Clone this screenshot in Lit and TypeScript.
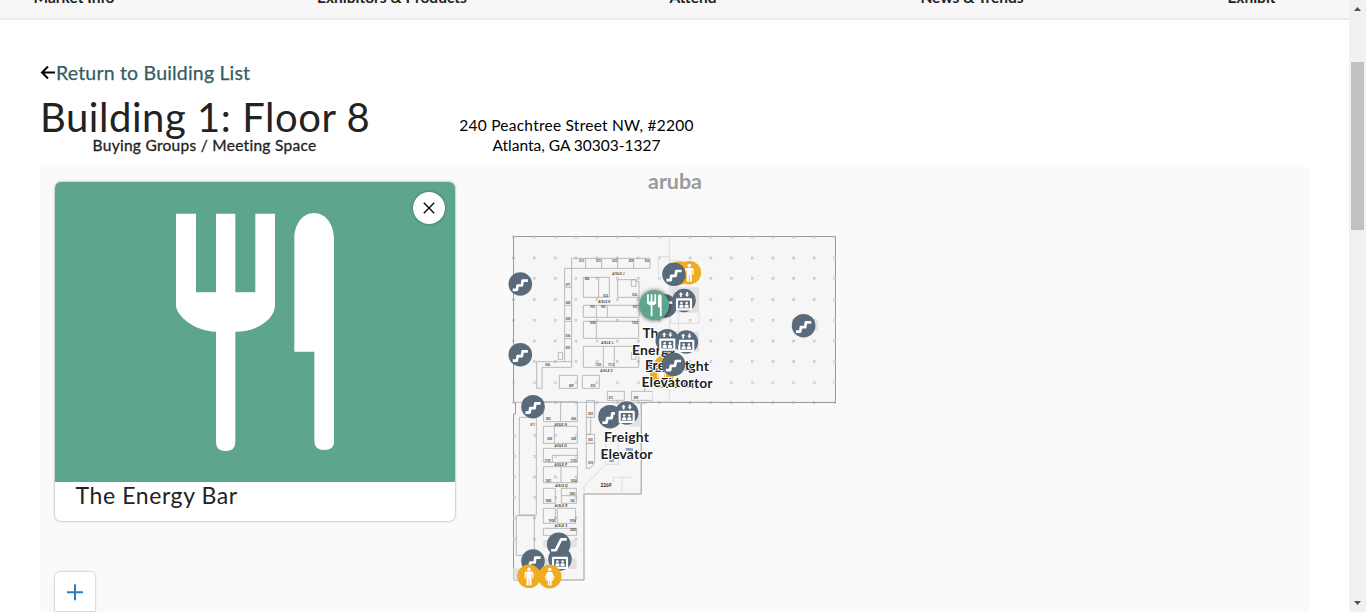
import { LitElement, html, svg, css } from "lit";
import { customElement } from "lit/decorators.js";

const FORK =
  "M363 95h60v236h60V95h58v236h60V95h59v275C660 408 612 449 541 449V781q0 26-29 26t-29-26V449C418 449 363 400 363 370zM718 509V170C718 130 740 93 777 93s60 37 60 77V779q0 25-29 25t-30-25V509z";

const NAV = ["Market Info", "Exhibitors & Products", "Attend", "News & Trends", "Exhibit"];

type Pin = [kind: string, x: number, y: number];

const RESTROOMS_BACK: Pin[] = [
  ["man", 680, 273], ["man", 689.3, 272.7], ["woman", 665, 367], ["man", 661.7, 376],
];
const PINS: Pin[] = [
  ["stairs", 520.3, 284], ["stairs", 520.3, 354.7], ["stairs", 533, 406.7],
  ["stairs", 610, 416.7], ["lift", 626.7, 413], ["stairs", 674, 274.3],
  ["stairs", 665, 306], ["lift", 684, 300.5], ["lift", 686.3, 342], ["lift", 667.3, 340.7],
  ["stairs", 673.5, 364.3], ["stairs", 803.6, 325.7], ["stairs", 533, 561],
  ["lift", 560, 559], ["escalator", 558.7, 544.3], ["man", 529, 576.3], ["woman", 549.7, 576.6],
];

const COLS = [513.5, 534.3, 555.3, 576, 597, 617.3, 638.3, 659.3, 690.2, 710.8, 731.4, 752.3, 773, 793.6, 814.2, 834.8];
const ROWS = [237, 258, 278.3, 299.5, 320.3, 341, 361.5, 382.5, 402.5];
const LOWER_ROWS = [435.5, 456.5, 477, 497.5, 518, 539];

const glyph = (kind: string) => {
  switch (kind) {
    case "stairs":
      return svg`<path d="M-7.6 5.9h4.2l.7-4.4h4.3l.7-4.8H7.6" class="line" stroke-width="2.7"/>`;
    case "escalator":
      return svg`<path d="M-7.6 5.9h4.7L2.5-4.9H8" class="line" stroke-width="2.6"/>`;
    case "lift":
      return svg`<path d="M-7-1.1H7V8.900H-7z" class="line" stroke-width="2.1" />
        <path d="M-5.300-5.7 -3.1-8.4 -.9-5.700zM.9-6.300H5.300L3.1-3.600z" fill="#fff"/>
        <path d="M-3.1-6V-3.600M3.1-6V-8.400" class="line" stroke-width="1.7"/>
        <path d="M-4.600 7.200V5.200q0-.9.9-.9h2.200q.9 0 .9.9v2zM.6 7.200V5.200q0-.9.9-.9h2.200q.9 0 .9.9v2z" fill="#fff"/>
        <circle cx="-2.6" cy="2.500" r="1.300" fill="#fff"/><circle cx="2.6" cy="2.500" r="1.300" fill="#fff"/>`;
    case "woman":
      return svg`<circle cy="-7.1" r="1.8" fill="#fff"/>
        <path d="M-2.3-4.7h4.6L5 1.2 3.8 1.8 2.1-1.6 4 4H1.9V9H.3V4H-.3V9h-1.6V4H-4L-2.1-1.6-3.8 1.8-5 1.2z" fill="#fff"/>`;
    default:
      return svg`<circle cy="-7.1" r="1.8" fill="#fff"/>
        <path d="M-3.2-4.7h6.4l1.2 1.1V2H3.2V-2.6H2.5V9H.4V2.5h-.8V9h-2.1V-2.6h-.7V2h-1.2V-3.6z" fill="#fff"/>`;
  }
};

const pin = ([kind, x, y]: Pin) => svg`<g transform="translate(${x} ${y})">
  <circle r="11.8" fill=${kind === "man" || kind === "woman" ? "#f0ac1e" : "#596b7b"}/>${glyph(kind)}</g>`;

const aisle = (letter: string, x: number, y: number) =>
  svg`<text class="aisle" x=${x} y=${y} text-anchor="middle" textLength="37">AISLE ${letter}</text>`;

const booth = (n: string, x: number, y: number) =>
  svg`<text class="booth" x=${x} y=${y} text-anchor="middle">${n}</text>`;

const label = (words: [string, number][], x: number, y: number) =>
  words.map(([w, len], i) => svg`<text class="label" x=${x} y=${y + i * 17} text-anchor="middle" textLength=${len}>${w}</text>`);

@customElement("floor-map")
export class FloorMap extends LitElement {
  static styles = css`
    :host { display: block; }
    svg { display: block; width: 1269px; height: 445px; }
    text { font-family: Lato, "Liberation Sans", sans-serif; }
    .brand { font: 700 20px Lato, sans-serif; fill: #9b9b9b; }
    .wall { fill: #f6f6f6; stroke: #999; stroke-width: 1; }
    .rooms { fill: none; stroke: #a9a9a9; stroke-width: 2.4; }
    .faint { fill: none; stroke: #dedede; stroke-width: 3; }
    .shade { fill: #e2e2e2; }
    .aisle { font: italic 700 10px Lato, sans-serif; fill: #333; stroke: none; }
    .booth { font: 700 8px Lato, sans-serif; fill: #444; stroke: none; }
    .column { fill: none; stroke: #c4c4c4; stroke-width: .8; }
    .line { fill: none; stroke: #fff; stroke-linejoin: round; }
    .label { font: 700 14px Lato, sans-serif; fill: #222; stroke: #fff; stroke-width: 2px; paint-order: stroke; stroke-linejoin: round; }
    .active { filter: drop-shadow(0 0 2px #000b); }
  `;

  render() {
    return html`<svg viewBox="40 167 1269 445">
      <text class="brand" x="648" y="188.800" textLength="54" lengthAdjust="spacingAndGlyphs">aruba</text>
      <path class="wall" d="M513.5 236.5H835.5V402.5H646V403H641.2V494H584V580H513.5V414H515.5V402.5H513.5z"/>
      ${ROWS.map((y) => COLS.map((x) => svg`<rect class="column" x=${x - 0.9} y=${y - 0.9} width="1.8" height="1.8"/>`))}
      ${LOWER_ROWS.map((y) => [514.5, 534.5, 555.5, 576].map((x) => svg`<rect class="column" x=${x - 0.9} y=${y - 0.9} width="1.8" height="1.8"/>`))}

      <g transform="translate(630 230) scale(.33333)">
        <path class="shade" d="M122 172h85v76h-85zM180 305h27v60h-27zM555 270h9v33h-9z"/>
        <path class="faint" d="M118 20V516M85 148V80h33v12h28v80h-24M122 248v32h85v-32M146 248v57M118 305h62M50 516h68M68 484v32"/>
      </g>

      <g class="rooms" transform="translate(505 230) scale(.33333)">
        <path d="M200 115V85H435V115H179V395M200 115V412H111V475H95V395H200M242 85v30M290 85v30M338 85v30M386 85v30M179 172h21M179 226h21M179 274h21M179 326h21"/>
        <path d="M160 367h13v21h-13zM235 142h78v60h-78zM281 142v60M402 202h-64v-53h55v5h9zM379 149h14v20h-14z"/>
        <path d="M235 226h167v36H235zM274 226v36M307 226v36M235 274h166v51H235zM274 274v51M235 349h166v63H235zM295 349v63M328 349v63M379 367h14v21h-14z"/>
        <path d="M163 436h54v39h-54zM232 436h51v39h-51zM307 484h51v27h-51zM442 484h-63v27h63M419 470v14"/>
        ${aisle("J", 340, 134)}${aisle("K", 298, 219)}${aisle("L", 307, 341)}${aisle("S", 304, 425)}
        ${booth("813", 230, 96)}${booth("821", 281, 96)}${booth("825", 329, 96)}${booth("829", 378, 96)}${booth("834", 426, 96)}
        ${booth("871", 189, 168)}${booth("868", 189, 221)}${booth("828", 189, 270)}${booth("836", 189, 322)}${booth("825", 189, 357)}
        ${booth("806", 246, 150)}${booth("824", 302, 200)}${booth("834", 389, 198)}${booth("901", 263, 234)}${booth("905", 295, 234)}${booth("921", 390, 234)}
        ${booth("1000", 263, 282)}${booth("1032", 390, 282)}${booth("1105", 280, 409)}${booth("1113", 318, 409)}
        ${booth("806", 128, 409)}${booth("809", 199, 472)}${booth("810", 264, 472)}${booth("811", 318, 508)}${booth("809", 393, 508)}
      </g>

      <g transform="translate(505 395) scale(.33333)">
        <path class="shade" d="M372 55h36v40h-36z"/>
        <path class="faint" d="M237 298V273L302 208V140M302 208h38M325 263V247h52M351 247v51M302 140h38v68"/>
        <g class="rooms">
          <path d="M25 22H640M94 67V360M43 360V67H94M115 20h102v60H115zM167 20v60M115 94h102v51H115zM148 94v51M115 160h102v42H115zM142 202v-21h75M115 215h102v48H115zM168 215v48"/>
          <path d="M115 280h36v45h-36zM169 280h45v45h-45zM169 302h45M244 17h25v50h-25zM244 67h13v51h-13zM244 118h25v27h-25zM244 145h25v60l-14 15h-11z"/>
          ${aisle("N", 167, 92)}${aisle("O", 167, 157)}${aisle("P", 167, 214)}${aisle("Q", 169, 276)}
          ${booth("811", 83, 94)}${booth("802", 130, 75)}${booth("804", 206, 75)}${booth("808", 134, 136)}${booth("808", 206, 136)}
          ${booth("1701", 128, 200)}${booth("1705", 206, 200)}${booth("1801", 130, 261)}${booth("1804", 206, 261)}
          ${booth("1800", 130, 321)}${booth("1805", 202, 299)}${booth("184", 202, 321)}${booth("803", 257, 61)}${booth("881", 257, 137)}${booth("818", 257, 206)}${booth("883", 320, 200)}
          <text class="aisle" x="372" y="167" text-anchor="middle">1905</text>
          <text x="303" y="277" text-anchor="middle" font-size="14" font-weight="700" fill="#222" stroke="none">2269</text>
        </g>
      </g>

      <g transform="translate(505 490) scale(.33333)">
        <path class="shade" d="M115 150h100v22H115zM115 205h100v32H115zM25 235h25v35H25z"/>
        <g class="rooms">
          <path d="M34 77h54v119H34zM43 75h51M115 55h36v45h-36zM157 55h55v45h-55zM115 136v-21h100v21z"/>
          ${aisle("R", 168, 52)}${aisle("S", 168, 112)}
          ${booth("1900", 140, 95)}${booth("1906", 203, 95)}${booth("2000", 204, 124)}
        </g>
      </g>

      ${RESTROOMS_BACK.map(pin)}
      ${label([["Bar", 22]], 656, 372)}
      ${label([["Freight", 45], ["Elevator", 52]], 686.5, 371)}
      ${label([["Freight", 45], ["Elevator", 52]], 667.5, 370)}
      ${label([["The", 23], ["Energy", 44]], 654, 338)}
      ${label([["Freight", 45], ["Elevator", 52]], 626.5, 442)}
      ${PINS.map(pin)}
      <g class="active" transform="translate(654.3 305.3)">
        <circle r="14.8" fill="#5da68d"/>
        <path transform="scale(.031) translate(-600 -450)" fill="#fff" d=${FORK}/>
      </g>
    </svg>`;
  }
}

@customElement("place-card")
export class PlaceCard extends LitElement {
  static styles = css`
    :host { display: block; width: 400px; height: 339px; border-radius: 6px; background: #fff; box-shadow: 0 0 0 1px #0000000d, 0 0 3px #0004; overflow: hidden; }
    .photo { display: grid; background: #5da68d; height: 300px; }
    .photo > * { grid-area: 1 / 1; }
    .close { width: 32px; height: 32px; border-radius: 50%; background: #fff; border: 0; padding: 0; justify-self: end; margin: 10px 10px 0 0; box-shadow: 0 0 3px #0006; }
    .name { margin: 0 0 0 20.5px; font: 400 23px/27px Lato, sans-serif; letter-spacing: .6px; color: #222; }
    svg { display: block; }
  `;
  render() {
    return html`<div class="photo">
        <svg width="400" height="300" viewBox="0 0 1200 900"><path fill="#fff" d=${FORK}/></svg>
        <button class="close" aria-label="Close">
          <svg width="32" height="32"><path d="M10.8 10.8 21.2 21.2M21.2 10.8 10.8 21.2" stroke="#000" stroke-width="1.3"/></svg>
        </button>
      </div>
      <h2 class="name">The Energy Bar</h2>`;
  }
}

@customElement("app-root")
export class AppRoot extends LitElement {
  static styles = css`
    :host { display: grid; grid-template-columns: 1349px 17px; height: 612px; overflow: hidden; background: #fff; font-family: Lato, "Liberation Sans", sans-serif; color: #222; }
    .page { display: flow-root; height: 612px; overflow: hidden; }
    nav { display: grid; grid-template-columns: 80px 150px 46px 106px 47px; column-gap: 203px; justify-content: start; justify-items: center; align-items: end; box-sizing: border-box; height: 43px; margin-top: -23px; padding: 0 0 11px 34px; background: #f7f7f7; border-bottom: 2px solid #ebebeb; font-size: 15.500px; font-weight: 700; line-height: 20px; white-space: nowrap; }
    main { padding: 40px 40px 0; }
    .back { display: flex; align-items: center; height: 26px; font-size: 19.5px; letter-spacing: .19px; line-height: 26px; color: #335c64; -webkit-text-stroke: .25px #335c64; }
    .back svg { margin-right: 1px; }
    .heading { display: flex; align-items: flex-end; gap: 90px; padding-top: 10.5px; }
    .title { width: 329px; text-align: center; white-space: nowrap; }
    h1 { margin: 0 0 -1.5px; font-size: 40px; font-weight: 400; line-height: 40px; text-align: left; letter-spacing: .55px; }
    .sub { font-size: 15.5px; line-height: 20px; letter-spacing: .28px; -webkit-text-stroke: .3px #222; }
    address { width: 235px; text-align: center; font-style: normal; font-size: 15.5px; line-height: 20px; color: #000; white-space: nowrap; }
    .street { letter-spacing: .24px; }
    .map { display: grid; grid-template-columns: 1269px; grid-template-rows: 445px; margin-top: 12px; background: #fafafa; overflow: hidden; }
    .map > * { grid-area: 1 / 1; }
    .controls { display: flex; flex-direction: column; justify-content: flex-start; padding: 15px; height: 445px; box-sizing: border-box; z-index: 1; }
    .controls place-card { flex: none; }
    .zoom { flex: none; width: 40px; height: 39px; margin-top: 51px; background: #fff; border-radius: 5px 5px 0 0; box-shadow: 0 0 0 1px #0000000d, 0 0 3px #0003; border-bottom: 1px solid #ddd; }
    .scroll { display: grid; grid-template-rows: 17px 1fr 17px; justify-items: center; background: #f1f1f1; }
    .thumb { width: 13px; height: 168px; margin-top: 45px; background: #c1c1c1; }
    svg { display: block; }
  `;

  render() {
    return html`<div class="page">
        <nav>${NAV.map((n) => html`<span>${n}</span>`)}</nav>
        <main>
          <div class="back">
            <svg width="15" height="16"><path d="M8 1.5 2 7.5l6 6M2 7.5h13" fill="none" stroke="#000" stroke-width="2"/></svg>
            <span>Return to Building List</span>
          </div>
          <div class="heading">
            <div class="title"><h1>Building 1: Floor 8</h1><div class="sub">Buying Groups / Meeting Space</div></div>
            <address><span class="street">240 Peachtree Street NW, #2200</span><br />Atlanta, GA 30303-1327</address>
          </div>
          <section class="map">
            <floor-map></floor-map>
            <div class="controls">
              <place-card></place-card>
              <div class="zoom"><svg width="40" height="40"><path d="M12 20.3h16M20 12.3v16" stroke="#2b7cc0" stroke-width="2"/></svg></div>
            </div>
          </section>
        </main>
      </div>
      <div class="scroll">
        <svg width="17" height="17"><path d="M5 11h7L8.500 7z" fill="#505050"/></svg>
        <div class="thumb"></div>
        <svg width="17" height="17"><path d="M5 6h7L8.500 10z" fill="#505050"/></svg>
      </div>`;
  }
}
